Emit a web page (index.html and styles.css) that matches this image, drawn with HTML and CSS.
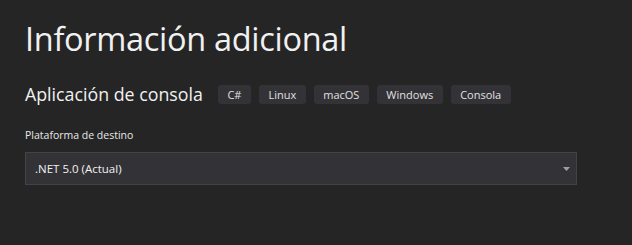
FILE: index.html
```html
<!DOCTYPE html>
<html lang="es">
<head>
	<meta charset="UTF-8">
	<title>Información adicional</title>
	<link rel="stylesheet" href="styles.css">
</head>
<body>
<div class="page">
	<h1 class="page-title">Información adicional</h1>
	<div class="template">
		<h2 class="template-name">Aplicación de consola</h2>
		<ul class="tags">
			<li>C#</li>
			<li>Linux</li>
			<li>macOS</li>
			<li>Windows</li>
			<li>Consola</li>
		</ul>
	</div>
	<div class="field">
		<label class="field-label">Plataforma de destino</label>
		<div class="select">
			<span>.NET 5.0 (Actual)</span>
			<svg class="select-arrow" width="7" height="4" viewBox="0 0 7 4">
				<path d="M0 0 H7 L3.5 4 Z" fill="#a0a0a0"/>
			</svg>
		</div>
	</div>
</div>
</body>
</html>
```

FILE: styles.css
```css
* {
	box-sizing: border-box;
}

html, body {
	margin: 0;
	height: 100%;
	background-color: #252526;
}

body {
	font-family: "Open Sans", "Noto Sans", sans-serif;
	color: #f1f1f1;
}

.page {
	padding: 17px 0 0 25px;
}

.page-title {
	margin: 0;
	font-size: 32.5px;
	font-weight: 400;
	line-height: 44px;
	letter-spacing: -0.3px;
}

.template {
	display: flex;
	align-items: center;
	margin-top: 20px;
}

.template-name {
	margin: 0 15px 0 0;
	font-size: 17.8px;
	font-weight: 400;
	line-height: 26px;
}

.tags {
	display: flex;
	gap: 8px;
	margin: 0;
	padding: 0;
	list-style: none;
}

.tags li {
	height: 19px;
	padding: 0 9.5px;
	border-radius: 3px;
	background-color: #333337;
	font-size: 11px;
	line-height: 19px;
	color: #e0e0e0;
}

.field {
	margin-top: 20px;
}

.field-label {
	display: block;
	font-size: 10.5px;
	line-height: 16px;
	color: #e8e8e8;
}

.select {
	display: flex;
	align-items: center;
	justify-content: space-between;
	width: 552px;
	height: 33px;
	margin-top: 9px;
	padding: 0 6px 0 9px;
	border: 1px solid #434346;
	background-color: #333337;
	font-size: 11.5px;
	color: #f1f1f1;
}

.select-arrow {
	display: block;
}
```
